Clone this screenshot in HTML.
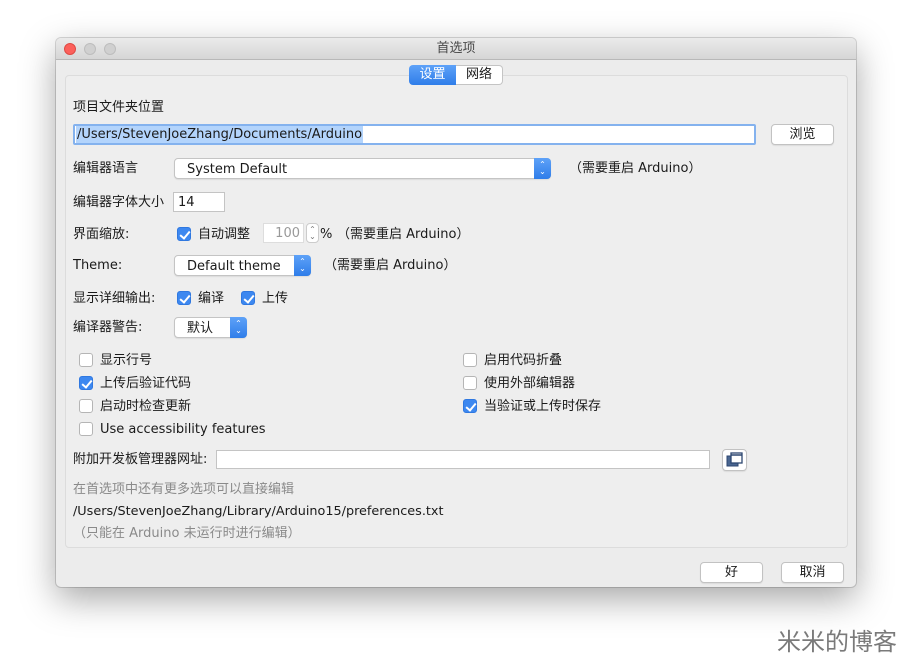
<!DOCTYPE html>
<html><head><meta charset="utf-8"><style>
*{box-sizing:border-box;margin:0;padding:0}
body{width:912px;height:662px;background:#fff;position:relative;overflow:hidden;font-family:"DejaVu Sans","Noto Sans CJK SC",sans-serif;font-size:13px;color:#1a1a1a}
.a{position:absolute;white-space:nowrap;line-height:16px;margin-top:1px}
.win{position:absolute;left:56px;top:38px;width:800px;height:549px;background:#ececec;border-radius:5px;box-shadow:0 12px 35px rgba(0,0,0,.35),0 0 0 1px rgba(0,0,0,.15)}
.title{position:absolute;left:0;top:0;width:800px;height:22px;background:linear-gradient(#ebebeb,#d6d6d6);border-bottom:1px solid #b8b8b8;border-radius:5px 5px 0 0;text-align:center;line-height:22px;color:#4a4a4a}
.dot{position:absolute;top:5px;width:12px;height:12px;border-radius:50%}
.panel{position:absolute;left:65px;top:75px;width:783px;height:473px;background:#eeeeee;border:1px solid #dcdcdc;border-radius:4px}
.inp{position:absolute;background:#fff;border:1px solid #c4c4c4}
.btn{position:absolute;background:#fff;border:1px solid #c2c2c2;border-radius:4px;text-align:center;box-shadow:0 1px 1px rgba(0,0,0,.08)}
.sel{position:absolute;background:#fff;border:1px solid #c4c4c4;border-radius:4px;box-shadow:0 1px 1px rgba(0,0,0,.08)}
.arr{position:absolute;right:-1px;top:-1px;bottom:-1px;width:17px;background:linear-gradient(#5ea2f8,#2f7de9);border-radius:0 4px 4px 0;color:#fff;font-size:8px;line-height:7px;text-align:center;padding-top:3px}
.cb{position:absolute;width:14px;height:14px;border-radius:3px;background:#fff;border:1px solid #b5b5b5}
.cb.on{background:#3d88f0;border-color:#2f78e0}
.cb.on:after{content:"";position:absolute;left:4px;top:1px;width:4px;height:8px;border:solid #fff;border-width:0 2px 2px 0;transform:rotate(40deg)}
.g{color:#8a8a8a}
</style></head><body>
<div class="win">
<div class="title">首选项</div>
<div class="dot" style="left:8px;background:#fc605b;border:1px solid #de4a44"></div>
<div class="dot" style="left:28px;background:#d0d0d0;border:1px solid #bdbdbd"></div>
<div class="dot" style="left:48px;background:#d0d0d0;border:1px solid #bdbdbd"></div>
</div>
<div class="panel"></div>
<div class="a" style="left:409px;top:65px;margin-top:0;width:47px;height:20px;background:linear-gradient(#5ea2f8,#2f7de9);border-radius:4px 0 0 4px;color:#fff;text-align:center;line-height:20px">设置</div>
<div class="a" style="left:456px;top:65px;margin-top:0;width:47px;height:20px;background:#fff;border:1px solid #c4c4c4;border-left:none;border-radius:0 4px 4px 0;text-align:center;line-height:18px">网络</div>

<div class="a" style="left:73px;top:99px">项目文件夹位置</div>
<div class="inp" style="left:73px;top:124px;width:683px;height:21px;border:2px solid #84b2ee;border-radius:2px"></div>
<div class="a" style="left:76px;top:126px;margin-top:0;background:#b3d4fc;line-height:17px;padding:0 1px">/Users/StevenJoeZhang/Documents/Arduino</div>
<div class="btn" style="left:771px;top:124px;width:63px;height:21px;line-height:19px">浏览</div>

<div class="a" style="left:73px;top:160px">编辑器语言</div>
<div class="sel" style="left:174px;top:158px;width:377px;height:21px"><span class="a" style="left:12px;top:2px">System Default</span><div class="arr">⌃<br>⌄</div></div>
<div class="a" style="left:569px;top:160px">（需要重启 Arduino）</div>

<div class="a" style="left:73px;top:194px">编辑器字体大小</div>
<div class="inp" style="left:173px;top:192px;width:52px;height:20px"><span class="a" style="left:4px;top:1px">14</span></div>

<div class="a" style="left:73px;top:226px">界面缩放:</div>
<div class="cb on" style="left:177px;top:227px"></div>
<div class="a" style="left:198px;top:226px">自动调整</div>
<div class="inp" style="left:263px;top:223px;width:41px;height:20px;border-color:#ddd"><span class="a g" style="right:3px;top:1px;color:#999">100</span></div>
<div class="a" style="left:306px;top:223px;margin-top:0;width:13px;height:20px;border:1px solid #ccc;border-radius:4px;background:#fff;font-size:8px;line-height:7px;text-align:center;color:#777;padding-top:2px">⌃<br>⌄</div>
<div class="a" style="left:320px;top:226px">%</div>
<div class="a" style="left:337px;top:226px">（需要重启 Arduino）</div>

<div class="a" style="left:73px;top:257px">Theme:</div>
<div class="sel" style="left:174px;top:255px;width:137px;height:21px"><span class="a" style="left:12px;top:2px">Default theme</span><div class="arr">⌃<br>⌄</div></div>
<div class="a" style="left:324px;top:257px">（需要重启 Arduino）</div>

<div class="a" style="left:73px;top:290px">显示详细输出:</div>
<div class="cb on" style="left:177px;top:291px"></div>
<div class="a" style="left:198px;top:290px">编译</div>
<div class="cb on" style="left:241px;top:291px"></div>
<div class="a" style="left:262px;top:290px">上传</div>

<div class="a" style="left:73px;top:319px">编译器警告:</div>
<div class="sel" style="left:174px;top:317px;width:73px;height:21px"><span class="a" style="left:12px;top:2px">默认</span><div class="arr">⌃<br>⌄</div></div>

<div class="cb" style="left:79px;top:353px"></div><div class="a" style="left:100px;top:352px">显示行号</div>
<div class="cb on" style="left:79px;top:376px"></div><div class="a" style="left:100px;top:375px">上传后验证代码</div>
<div class="cb" style="left:79px;top:399px"></div><div class="a" style="left:100px;top:398px">启动时检查更新</div>
<div class="cb" style="left:79px;top:422px"></div><div class="a" style="left:100px;top:421px">Use accessibility features</div>
<div class="cb" style="left:463px;top:353px"></div><div class="a" style="left:484px;top:352px">启用代码折叠</div>
<div class="cb" style="left:463px;top:376px"></div><div class="a" style="left:484px;top:375px">使用外部编辑器</div>
<div class="cb on" style="left:463px;top:399px"></div><div class="a" style="left:484px;top:398px">当验证或上传时保存</div>

<div class="a" style="left:73px;top:451px">附加开发板管理器网址:</div>
<div class="inp" style="left:216px;top:450px;width:494px;height:19px"></div>
<div class="btn" style="left:722px;top:449px;width:25px;height:22px">
<svg width="23" height="20" viewBox="0 0 23 20" style="position:absolute;left:0;top:0"><rect x="4" y="6" width="11" height="10" fill="#4a6691" stroke="#2c4670"/><rect x="8" y="3" width="11" height="10" fill="#fff" stroke="#2c4670" stroke-width="1.3"/><line x1="8" y1="5" x2="19" y2="5" stroke="#2c4670" stroke-width="1.5"/></svg></div>

<div class="a g" style="left:73px;top:481px">在首选项中还有更多选项可以直接编辑</div>
<div class="a" style="left:73px;top:503px;font-size:12.8px">/Users/StevenJoeZhang/Library/Arduino15/preferences.txt</div>
<div class="a g" style="left:73px;top:525px">（只能在 Arduino 未运行时进行编辑）</div>

<div class="btn" style="left:700px;top:562px;width:63px;height:21px;line-height:19px">好</div>
<div class="btn" style="left:781px;top:562px;width:63px;height:21px;line-height:19px">取消</div>

<div class="a" style="left:777px;top:627px;margin-top:0;font-size:24px;color:#7a7a7a;line-height:30px">米米的博客</div>
</body></html>
